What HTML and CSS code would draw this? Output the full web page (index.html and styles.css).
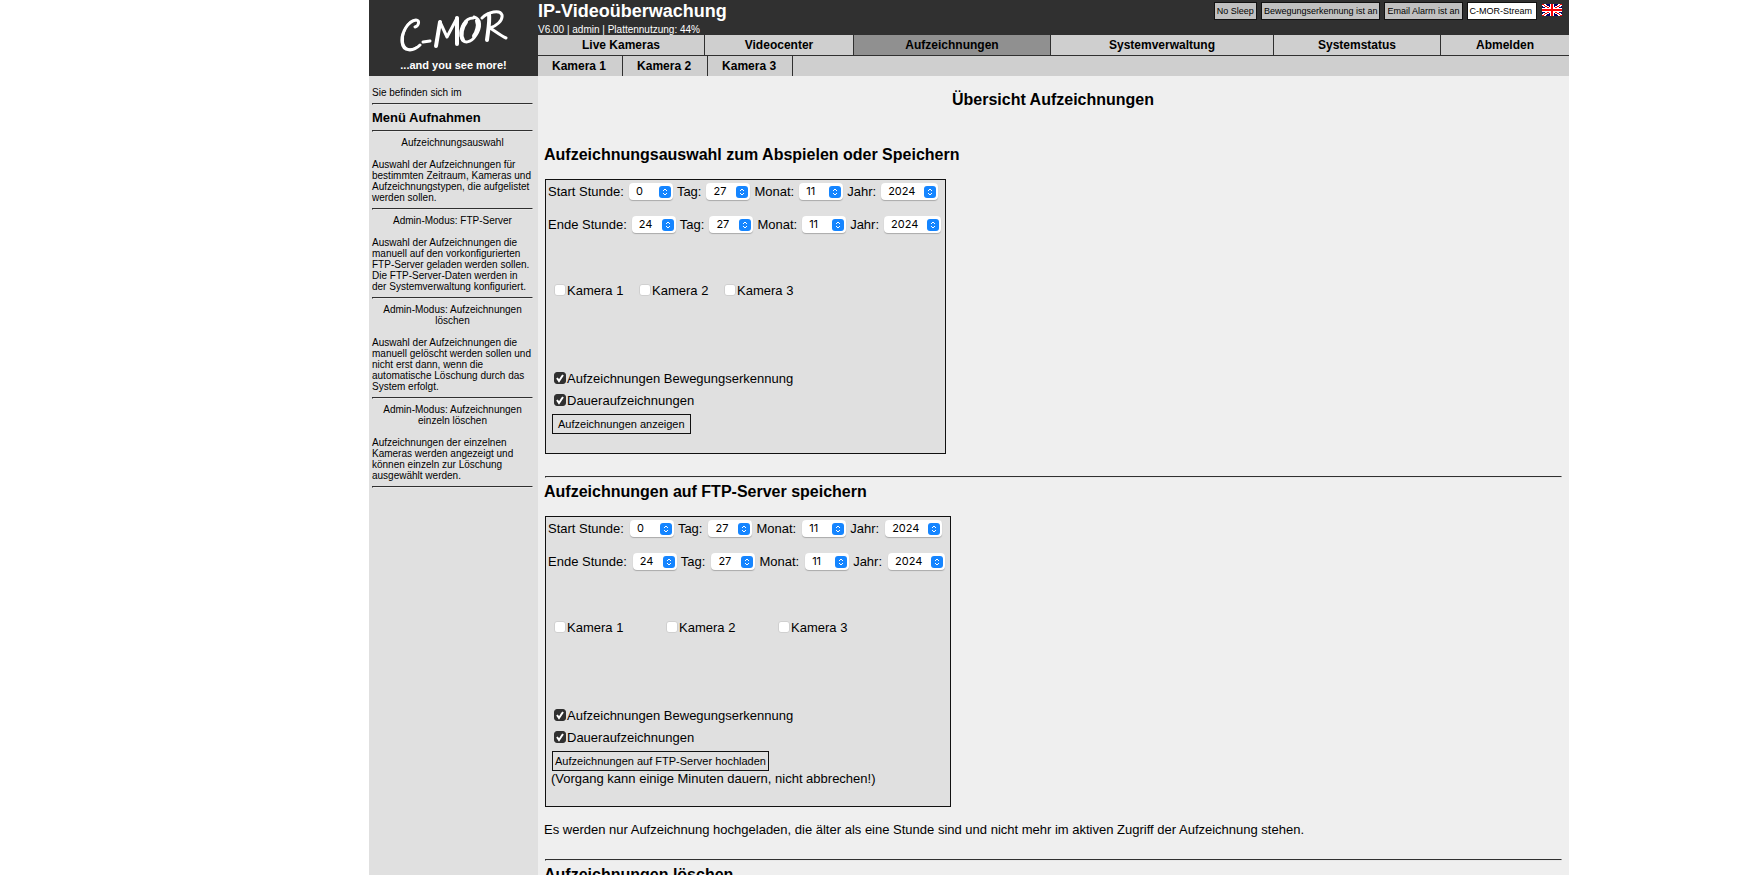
FILE: index.html
```html
<!DOCTYPE html>
<html lang="de">
<head>
<meta charset="utf-8">
<title>C-MOR IP-Videoüberwachung</title>
<link rel="stylesheet" href="styles.css">
</head>
<body>
<div class="page">
  <header class="header">
    <a class="logo" href="#" aria-label="C-MOR">
      <svg class="logo-mark" viewBox="0 0 108 44" aria-hidden="true">
        <g fill="none" stroke="#fff" stroke-linecap="round" stroke-linejoin="round">
          <path stroke-width="3" d="M15 18C19 17 20 11 16 11C8 12 1 24 2 33C3 43 13 43 20 36"/>
          <path stroke-width="2" d="M12 12C5 16 2 26 3 33C4 41 11 42 17 38"/>
          <path stroke-width="3" d="M23 33L30 32"/>
          <path stroke-width="4" d="M36 37L40 13M57 9L57 35"/>
          <path stroke-width="3" d="M40 13L47 28L57 9"/>
          <path stroke-width="3" d="M73 9C65 9 60 19 61 27C63 36 71 34 76 26C81 18 81 10 74 8"/>
          <path stroke-width="4" d="M66 13C62 18 60 26 63 31M77 12C79 16 77 23 74 27"/>
          <path stroke-width="4" d="M89 5C90 13 88 22 87 31"/>
          <path stroke-width="3" d="M82 9C88 3 100 0 102 6C103 12 96 17 90 19C95 22 101 27 106 29"/>
        </g>
      </svg>
      <span class="slogan">...and you see more!</span>
    </a>
    <div class="header-main">
      <div class="topbar">
        <div class="brand">
          <div class="title">IP-Videoüberwachung</div>
          <div class="status">V6.00 | admin | Plattennutzung: 44%</div>
        </div>
        <div class="actions">
          <button class="chip">No Sleep</button>
          <button class="chip">Bewegungserkennung ist an</button>
          <button class="chip">Email Alarm ist an</button>
          <button class="chip chip-stream">C-MOR-Stream</button>
          <a class="flag" href="#" aria-label="English">
            <svg viewBox="0 0 20 12" width="20" height="12" shape-rendering="crispEdges" aria-hidden="true">
              <rect width="20" height="12" fill="#006"/>
              <path d="M0 0L20 12M20 0L0 12" stroke="#fff" stroke-width="3"/>
              <path d="M0 0L20 12M20 0L0 12" stroke="#f00" stroke-width="1"/>
              <path d="M10 0V12M0 6H20" stroke="#fff" stroke-width="4"/>
              <path d="M10 0V12M0 6H20" stroke="#f00" stroke-width="2"/>
            </svg>
          </a>
        </div>
      </div>
      <nav class="tabs">
        <a href="#">Live Kameras</a>
        <a href="#">Videocenter</a>
        <a class="active" href="#">Aufzeichnungen</a>
        <a href="#">Systemverwaltung</a>
        <a href="#">Systemstatus</a>
        <a href="#">Abmelden</a>
      </nav>
      <nav class="subtabs">
        <a href="#">Kamera 1</a>
        <a href="#">Kamera 2</a>
        <a href="#">Kamera 3</a>
      </nav>
    </div>
  </header>
  <div class="body">
    <aside class="sidebar">
      <p>Sie befinden sich im</p>
      <hr>
      <h2 class="menu-title">Menü Aufnahmen</h2>
      <hr>
      <h3>Aufzeichnungsauswahl</h3>
      <p>Auswahl der Aufzeichnungen für bestimmten Zeitraum, Kameras und Aufzeichnungstypen, die aufgelistet werden sollen.</p>
      <hr>
      <h3>Admin-Modus: FTP-Server</h3>
      <p>Auswahl der Aufzeichnungen die manuell auf den vorkonfigurierten FTP-Server geladen werden sollen. Die FTP-Server-Daten werden in der Systemverwaltung konfiguriert.</p>
      <hr>
      <h3>Admin-Modus: Aufzeichnungen löschen</h3>
      <p>Auswahl der Aufzeichnungen die manuell gelöscht werden sollen und nicht erst dann, wenn die automatische Löschung durch das System erfolgt.</p>
      <hr>
      <h3>Admin-Modus: Aufzeichnungen einzeln löschen</h3>
      <p>Aufzeichnungen der einzelnen Kameras werden angezeigt und können einzeln zur Löschung ausgewählt werden.</p>
      <hr>
    </aside>
    <main class="content">
      <h1>Übersicht Aufzeichnungen</h1>
      <h2>Aufzeichnungsauswahl zum Abspielen oder Speichern</h2>
      <form class="panel">
        <div class="row">
          <label for="a1">Start Stunde:</label><select id="a1"><option>0</option></select>
          <label for="a2">Tag:</label><select id="a2"><option>27</option></select>
          <label for="a3">Monat:</label><select id="a3"><option>11</option></select>
          <label for="a4">Jahr:</label><select id="a4" class="year"><option>2024</option></select>
        </div>
        <div class="row">
          <label for="a5">Ende Stunde:</label><select id="a5"><option>24</option></select>
          <label for="a6">Tag:</label><select id="a6"><option>27</option></select>
          <label for="a7">Monat:</label><select id="a7"><option>11</option></select>
          <label for="a8">Jahr:</label><select id="a8" class="year"><option>2024</option></select>
        </div>
        <div class="cameras">
          <label class="check"><input type="checkbox">Kamera 1</label>
          <label class="check"><input type="checkbox">Kamera 2</label>
          <label class="check"><input type="checkbox">Kamera 3</label>
        </div>
        <label class="check"><input type="checkbox" checked>Aufzeichnungen Bewegungserkennung</label>
        <label class="check"><input type="checkbox" checked>Daueraufzeichnungen</label>
        <button class="submit submit-show" type="button">Aufzeichnungen anzeigen</button>
      </form>
      <hr>
      <h2>Aufzeichnungen auf FTP-Server speichern</h2>
      <form class="panel panel-ftp">
        <div class="row">
          <label for="b1">Start Stunde:</label><select id="b1"><option>0</option></select>
          <label for="b2">Tag:</label><select id="b2"><option>27</option></select>
          <label for="b3">Monat:</label><select id="b3"><option>11</option></select>
          <label for="b4">Jahr:</label><select id="b4" class="year"><option>2024</option></select>
        </div>
        <div class="row">
          <label for="b5">Ende Stunde:</label><select id="b5"><option>24</option></select>
          <label for="b6">Tag:</label><select id="b6"><option>27</option></select>
          <label for="b7">Monat:</label><select id="b7"><option>11</option></select>
          <label for="b8">Jahr:</label><select id="b8" class="year"><option>2024</option></select>
        </div>
        <div class="cameras">
          <label class="check"><input type="checkbox">Kamera 1</label>
          <label class="check"><input type="checkbox">Kamera 2</label>
          <label class="check"><input type="checkbox">Kamera 3</label>
        </div>
        <label class="check"><input type="checkbox" checked>Aufzeichnungen Bewegungserkennung</label>
        <label class="check"><input type="checkbox" checked>Daueraufzeichnungen</label>
        <button class="submit" type="button">Aufzeichnungen auf FTP-Server hochladen</button>
        <p class="hint">(Vorgang kann einige Minuten dauern, nicht abbrechen!)</p>
      </form>
      <p class="note">Es werden nur Aufzeichnung hochgeladen, die älter als eine Stunde sind und nicht mehr im aktiven Zugriff der Aufzeichnung stehen.</p>
      <hr>
      <h2>Aufzeichnungen löschen</h2>
    </main>
  </div>
</div>
</body>
</html>
```
FILE: styles.css
```css
* { box-sizing: border-box; }
html, body { height: 100%; }
body {
  margin: 0;
  padding-left: 200px;
  overflow: hidden;
  background: #fff;
  color: #000;
  font: 13px/15px "Liberation Sans", Arial, sans-serif;
}
h1, h2, h3, p { margin: 0; }
a { color: inherit; text-decoration: none; }
button, select, input { font-family: inherit; color: inherit; }
hr {
  margin: 0;
  height: 2px;
  border: 1px solid #303030;
  border-right-color: #e8e8e8;
  border-bottom-color: #e8e8e8;
}

.page {
  display: flex;
  flex-direction: column;
  max-width: 1200px;
  min-height: 100%;
  margin: 0 auto;
}

.header { display: flex; background: #303030; }
.logo {
  display: flex;
  flex-direction: column;
  align-items: center;
  flex: 0 0 169px;
  padding-top: 9px;
  color: #fff;
}
.logo-mark { width: 108px; height: 44px; }
.slogan { margin-top: 6px; font-size: 11px; line-height: 13px; font-weight: bold; }
.header-main { flex: 1; }
.topbar { display: flex; justify-content: space-between; height: 35px; color: #fff; }
.title { padding-top: 1px; font-size: 18px; line-height: 20px; font-weight: bold; }
.status { padding-top: 3px; font-size: 10px; line-height: 12px; }
.actions { display: flex; align-items: flex-start; gap: 4px; padding: 2px 7px 0 0; }
.chip {
  height: 18px;
  padding: 0 2px;
  border: 1px solid #111;
  background: #c0c0c0;
  color: #000;
  font-size: 9px;
  line-height: 16px;
}
.chip-stream { margin-right: 1px; padding-right: 4px; background: #fff; }
.flag { padding-top: 2px; line-height: 0; }

.tabs {
  display: grid;
  grid-template-columns: 167fr 149fr 197fr 223fr 167fr 128fr;
  border-bottom: 1px solid #303030;
}
.tabs a, .subtabs a {
  border-right: 1px solid #303030;
  background: #cfcfcf;
  font-size: 12px;
  line-height: 20px;
  font-weight: bold;
  text-align: center;
}
.tabs a:last-child { border-right: 0; }
.tabs .active { background: #909090; }
.subtabs { display: flex; background: #cfcfcf; }
.subtabs a { padding: 0 16px 0 14px; }

.body { display: flex; flex: 1; background: #efefef; }
.sidebar {
  flex: 0 0 169px;
  padding: 11px 5px 0 3px;
  background: #e0e0e0;
  font-size: 10px;
  line-height: 11px;
}
.sidebar hr { margin: 5px 0; }
.sidebar h3 { margin-bottom: 11px; font-size: 10px; font-weight: normal; text-align: center; }
.sidebar .menu-title { font-size: 13px; line-height: 15px; }

.content { flex: 1; padding: 14px 7px 0 6px; }
h1, .content h2 { font-size: 16px; line-height: 20px; }
h1 { margin-bottom: 35px; text-align: center; }
.content h2 { margin: 0 0 14px; }
.content hr { margin: 22px 0 4px 1px; }
.panel {
  display: flex;
  flex-direction: column;
  align-items: flex-start;
  width: 401px;
  height: 275px;
  margin-left: 1px;
  padding: 3px 2px;
  border: 1px solid #111;
  background: #e0e0e0;
}
.panel-ftp { width: 406px; height: 291px; }
.row { display: flex; align-items: center; height: 17px; margin-bottom: 16px; white-space: nowrap; }
select {
  appearance: none;
  width: 44px;
  height: 17px;
  margin: 0 4px 0 5px;
  padding: 0 0 0 7px;
  border: 0;
  border-radius: 4px;
  box-shadow: 0 1px 1px #aaa;
  background: #fff url("data:image/svg+xml,%3Csvg xmlns='http://www.w3.org/2000/svg' width='12' height='12'%3E%3Crect width='12' height='12' rx='3' fill='%231585ff'/%3E%3Cpath d='M4 5L6 3L8 5M4 7L6 9L8 7' fill='none' stroke='%23fff'/%3E%3C/svg%3E") right 2px center no-repeat;
  color: #000;
  font: 11px/17px Inter, sans-serif;
}
.panel-ftp select { margin-left: 6px; }
.panel .year { width: 57px; margin-right: 0; }
.cameras { display: grid; grid-template-columns: repeat(3, 85px); height: 88px; margin-top: 30px; }
.panel-ftp .cameras { grid-template-columns: repeat(3, 112px); }
.check { display: flex; align-items: center; height: 22px; padding-left: 6px; white-space: nowrap; }
.check input {
  appearance: none;
  width: 12px;
  height: 12px;
  margin: 0 1px 0 0;
  border: 1px solid #d0d0d0;
  border-radius: 3px;
  background: #fff;
}
.check input:checked {
  border-color: #303030;
  background: #303030 url("data:image/svg+xml,%3Csvg xmlns='http://www.w3.org/2000/svg' width='10' height='10'%3E%3Cpath d='M2 5L4 8L8 2' fill='none' stroke='%23fff' stroke-width='2'/%3E%3C/svg%3E") center no-repeat;
}
.submit {
  height: 20px;
  margin: 3px 0 0 4px;
  padding: 0 2px;
  border: 1px solid #111;
  background: #e0e0e0;
  font-size: 11px;
}
.submit-show { padding: 0 5px; }
.hint { padding-left: 3px; }
.note { margin-top: 15px; }
```
